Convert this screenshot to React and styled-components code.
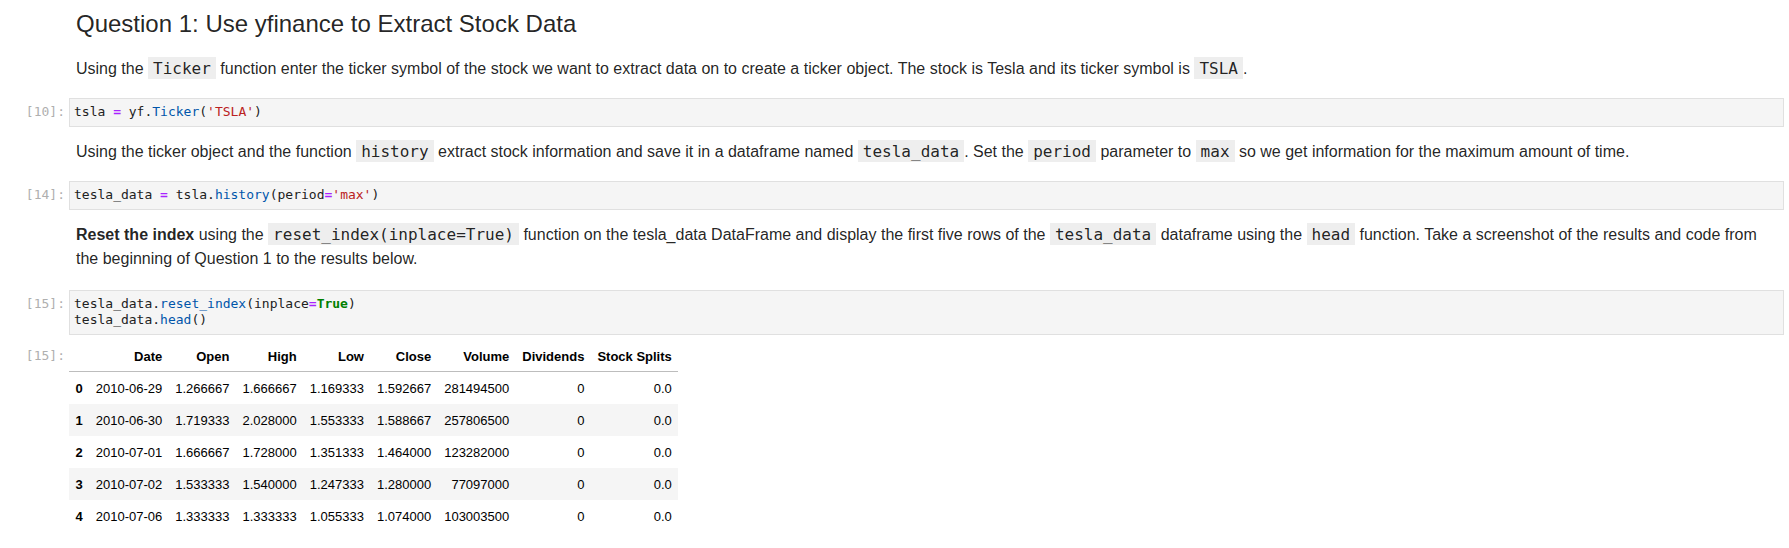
import styled, { createGlobalStyle } from "styled-components";

const GlobalStyle = createGlobalStyle`
  html, body {
    margin: 0;
    padding: 0;
    background: #ffffff;
  }
  body {
    font-family: "Liberation Sans", Arial, sans-serif;
    color: rgba(0, 0, 0, 0.87);
  }
`;

const rows = [
  ["0", "2010-06-29", "1.266667", "1.666667", "1.169333", "1.592667", "281494500", "0", "0.0"],
  ["1", "2010-06-30", "1.719333", "2.028000", "1.553333", "1.588667", "257806500", "0", "0.0"],
  ["2", "2010-07-01", "1.666667", "1.728000", "1.351333", "1.464000", "123282000", "0", "0.0"],
  ["3", "2010-07-02", "1.533333", "1.540000", "1.247333", "1.280000", "77097000", "0", "0.0"],
  ["4", "2010-07-06", "1.333333", "1.333333", "1.055333", "1.074000", "103003500", "0", "0.0"],
];

const columns = ["Date", "Open", "High", "Low", "Close", "Volume", "Dividends", "Stock Splits"];

export default function App() {
  return (
    <>
      <GlobalStyle />
      <Notebook>
        <Cell $mt={10}>
          <Prompt />
          <Markdown>
            <Heading>Question 1: Use yfinance to Extract Stock Data</Heading>
          </Markdown>
        </Cell>

        <Cell $mt={18}>
          <Prompt />
          <Markdown>
            <Para>
              Using the <InlineCode>Ticker</InlineCode> function enter the ticker symbol of the stock
              we want to extract data on to create a ticker object. The stock is Tesla and its ticker
              symbol is <InlineCode>TSLA</InlineCode>.
            </Para>
          </Markdown>
        </Cell>

        <Cell $mt={17.5}>
          <Prompt>[10]:</Prompt>
          <Editor>
            tsla <Tok $k="op">=</Tok> yf.<Tok $k="prop">Ticker</Tok>(<Tok $k="str">'TSLA'</Tok>)
          </Editor>
        </Cell>

        <Cell $mt={13}>
          <Prompt />
          <Markdown>
            <Para>
              Using the ticker object and the function <InlineCode>history</InlineCode> extract stock
              information and save it in a dataframe named <InlineCode>tesla_data</InlineCode>. Set
              the <InlineCode>period</InlineCode> parameter to <InlineCode>max</InlineCode> so we get
              information for the maximum amount of time.
            </Para>
          </Markdown>
        </Cell>

        <Cell $mt={17.5}>
          <Prompt>[14]:</Prompt>
          <Editor>
            tesla_data <Tok $k="op">=</Tok> tsla.<Tok $k="prop">history</Tok>(period
            <Tok $k="op">=</Tok>
            <Tok $k="str">'max'</Tok>)
          </Editor>
        </Cell>

        <Cell $mt={13}>
          <Prompt />
          <Markdown>
            <Para>
              <strong>Reset the index</strong> using the{" "}
              <InlineCode>reset_index(inplace=True)</InlineCode> function on the tesla_data DataFrame
              and display the first five rows of the <InlineCode>tesla_data</InlineCode> dataframe
              using the <InlineCode>head</InlineCode> function. Take a screenshot of the results and
              code from the beginning of Question 1 to the results below.
            </Para>
          </Markdown>
        </Cell>

        <Cell $mt={19}>
          <Prompt>[15]:</Prompt>
          <Editor>
            <Line>
              tesla_data.<Tok $k="prop">reset_index</Tok>(inplace<Tok $k="op">=</Tok>
              <Tok $k="kw">True</Tok>)
            </Line>
            <Line>
              tesla_data.<Tok $k="prop">head</Tok>()
            </Line>
          </Editor>
        </Cell>

        <Cell $mt={5.5}>
          <Prompt $pt={8}>[15]:</Prompt>
          <Output>
            <Table>
              <thead>
                <tr>
                  <HeadCell />
                  {columns.map((c) => (
                    <HeadCell key={c}>{c}</HeadCell>
                  ))}
                </tr>
              </thead>
              <tbody>
                {rows.map(([idx, ...vals]) => (
                  <Row key={idx}>
                    <IndexCell>{idx}</IndexCell>
                    {vals.map((v, i) => (
                      <DataCell key={i}>{v}</DataCell>
                    ))}
                  </Row>
                ))}
              </tbody>
            </Table>
          </Output>
        </Cell>
      </Notebook>
    </>
  );
}

const Notebook = styled.div`
  display: flex;
  flex-direction: column;
  width: 1789px;
  box-sizing: border-box;
  padding: 0 5px 20px 5px;
`;

const Cell = styled.div`
  display: flex;
  align-items: flex-start;
  margin-top: ${(p) => p.$mt || 0}px;
`;

const Prompt = styled.div`
  flex: 0 0 64px;
  box-sizing: border-box;
  padding: ${(p) => p.$pt ?? 6}px 4px 0 0;
  text-align: right;
  font-family: "DejaVu Sans Mono", monospace;
  font-size: 13px;
  line-height: 16.5px;
  color: #616161;
  opacity: 0.5;
  white-space: pre;
`;

const Markdown = styled.div`
  flex: 1;
  min-width: 0;
  padding: 0 20px 0 7px;
  font-size: 16px;
  line-height: 24px;
  color: rgba(0, 0, 0, 0.87);
`;

const Heading = styled.h2`
  margin: 0;
  font-size: 24px;
  line-height: 28.8px;
  font-weight: 500;
`;

const Para = styled.p`
  margin: 0;

  strong {
    font-weight: 700;
  }
`;

const InlineCode = styled.code`
  font-family: "DejaVu Sans Mono", monospace;
  font-size: 16px;
  background: #eeeeee;
  padding: 1.5px 5px;
`;

const Editor = styled.div`
  flex: 1;
  min-width: 0;
  background: #f5f5f5;
  border: 1px solid #e0e0e0;
  padding: 5px 4px;
  font-family: "DejaVu Sans Mono", monospace;
  font-size: 13px;
  line-height: 16.5px;
  color: #212121;
`;

const Line = styled.div`
  white-space: nowrap;
`;

const tokenColors = {
  op: "#aa22ff",
  prop: "#0055aa",
  str: "#ba2121",
  kw: "#008000",
};

const Tok = styled.span`
  color: ${(p) => tokenColors[p.$k] || "#212121"};
  font-weight: ${(p) => (p.$k === "kw" || p.$k === "op" ? 700 : 400)};
`;

const Output = styled.div`
  flex: 1;
  min-width: 0;
`;

const Table = styled.table`
  border-collapse: collapse;
  border-spacing: 0;
  font-family: "Liberation Sans", Arial, sans-serif;
  font-size: 13px;
  line-height: 13px;
  color: #000000;
`;

const HeadCell = styled.th`
  padding: 10px 6.5px 8px;
  text-align: right;
  font-weight: 700;
  border-bottom: 1px solid #bdbdbd;
  white-space: nowrap;
`;

const Row = styled.tr`
  background: #ffffff;

  &:nth-child(even) {
    background: #f5f5f5;
  }
`;

const IndexCell = styled.th`
  padding: 9.5px 6.5px;
  text-align: right;
  font-weight: 700;
  white-space: nowrap;
`;

const DataCell = styled.td`
  padding: 9.5px 6.5px;
  text-align: right;
  white-space: nowrap;
`;
